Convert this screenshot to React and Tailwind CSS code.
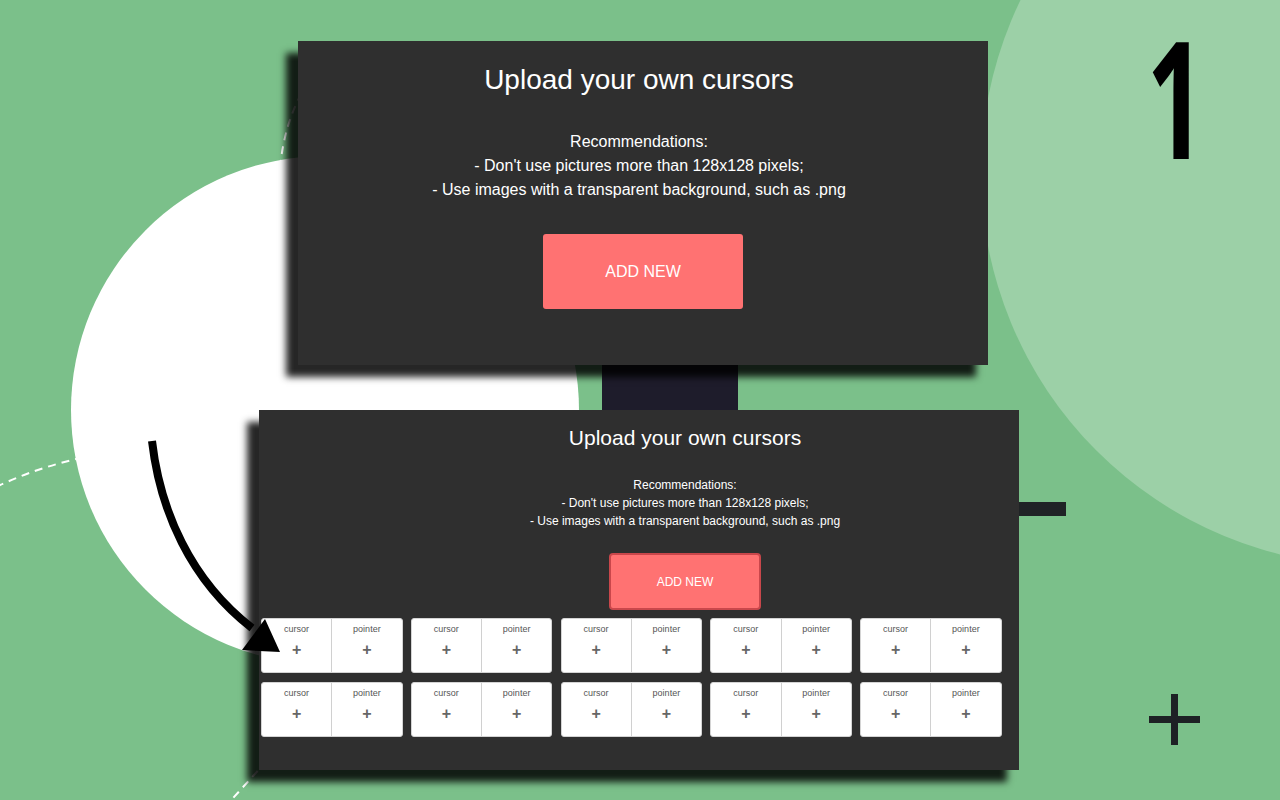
import React from 'react';

const slots = Array.from({ length: 10 }, (_, i) => i);

const CursorCard = () => (
  <div className="flex h-[55px] w-[141.5px] overflow-hidden rounded-[3px] border border-[#d4d4d4] bg-white">
    {['cursor', 'pointer'].map((label, i) => (
      <div
        key={label}
        className={`flex flex-1 flex-col items-center pt-[4px] ${i === 0 ? 'border-r border-[#d0d0d0]' : ''}`}
      >
        <span className="text-[9px] leading-[12px] text-[#555]">{label}</span>
        <span className="mt-[7px] text-[16px] font-bold leading-[16px] text-[#666]">+</span>
      </div>
    ))}
  </div>
);

const Background = () => (
  <svg className="absolute inset-0" width="1280" height="800" viewBox="0 0 1280 800">
    <circle cx="1375" cy="172" r="394" fill="#9cd0a7" />
    <path d="M -4 487 Q 40 466 90 456" fill="none" stroke="#ffffff" strokeWidth="2" strokeDasharray="8 6" />
    <path d="M 280 168 Q 284 126 302 92" fill="none" stroke="#ffffff" strokeWidth="2" strokeDasharray="8 6" />
    <circle cx="325" cy="410" r="254" fill="#ffffff" />
    <path d="M 224 808 Q 244 786 264 764" fill="none" stroke="#ffffff" strokeWidth="2" strokeDasharray="8 6" />
    <rect x="1010" y="502" width="56" height="14" fill="#202326" />
    <rect x="1171" y="694" width="7" height="51" fill="#1e2125" />
    <rect x="1149" y="716" width="51" height="7" fill="#1e2125" />
  </svg>
);

const Arrow = () => (
  <svg className="pointer-events-none absolute left-0 top-0 z-20" width="400" height="700" viewBox="0 0 400 700">
    <path d="M 152 441 C 160 510 190 580 252 628" fill="none" stroke="#000" strokeWidth="8" />
    <polygon points="242,650 265,619 280,652" fill="#000" />
  </svg>
);

export default function App() {
  return (
    <div
      className="relative h-[800px] w-[1280px] overflow-hidden bg-[#7bc08a]"
      style={{ fontFamily: '"Liberation Sans", Arial, sans-serif' }}
    >
      <Background />

      <div
        className="absolute left-[1129px] top-[14px] scale-x-[0.62] text-[164px] font-bold leading-[164px] text-black"
        style={{ fontFamily: '"Open Sans", "Noto Sans", sans-serif' }}
      >
        1
      </div>

      <div className="relative flex flex-col pt-[41px]">
        {/* first panel */}
        <div className="relative z-10 ml-[298px] flex h-[324px] w-[690px] flex-col items-center bg-[#2f2f2f] pr-[8px] pt-[23px] shadow-[-12px_12px_7px_rgba(0,0,0,0.85)]">
          <h1 className="text-[28px] leading-[32px] text-white">Upload your own cursors</h1>
          <div className="mt-[34px] text-center text-[16px] leading-[24px] text-white">
            <p>Recommendations:</p>
            <p>- Don't use pictures more than 128x128 pixels;</p>
            <p>- Use images with a transparent background, such as .png</p>
          </div>
          <button className="mt-[32px] ml-[8px] flex h-[75px] w-[200px] items-center justify-center rounded-[3px] bg-[#ff7272] text-[16px] text-white">
            ADD NEW
          </button>
        </div>

        <div className="ml-[602px] h-[45px] w-[136px] bg-[#1e1c2b]" />

        {/* second panel */}
        <div className="relative z-10 ml-[259px] flex h-[360px] w-[760px] flex-col bg-[#2f2f2f] pt-[16px] shadow-[-12px_12px_7px_rgba(0,0,0,0.85)]">
          <div className="flex flex-col items-center pl-[92px]">
            <h2 className="text-[21px] leading-[24px] text-white">Upload your own cursors</h2>
            <div className="mt-[26px] text-center text-[12px] leading-[18px] text-white">
              <p>Recommendations:</p>
              <p>- Don't use pictures more than 128x128 pixels;</p>
              <p>- Use images with a transparent background, such as .png</p>
            </div>
            <button className="mt-[23px] flex h-[57px] w-[152px] items-center justify-center rounded-[4px] border-2 border-[#c9474b] bg-[#ff7272] text-[12px] text-white">
              ADD NEW
            </button>
          </div>
          <div className="mt-[8px] grid grid-cols-[repeat(5,141.5px)] gap-x-[8.25px] gap-y-[9px] pl-[2px]">
            {slots.map((i) => (
              <CursorCard key={i} />
            ))}
          </div>
        </div>
      </div>

      <Arrow />
    </div>
  );
}
